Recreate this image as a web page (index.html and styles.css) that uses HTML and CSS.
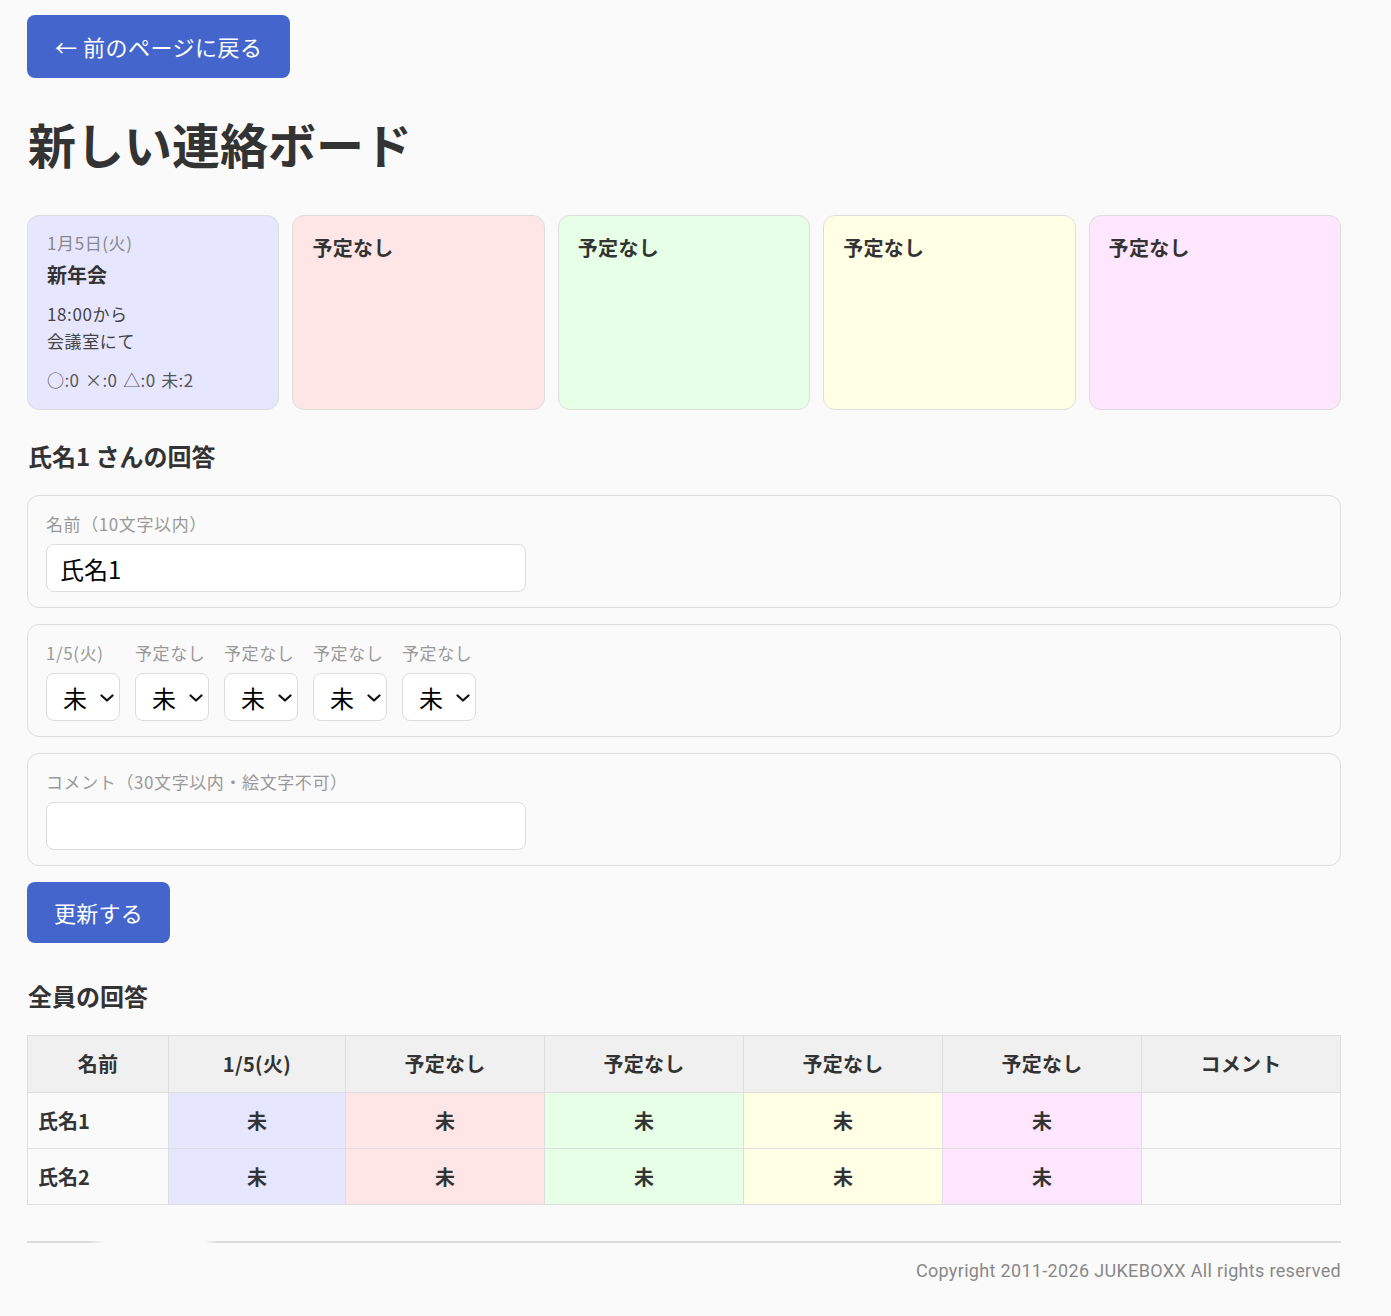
FILE: index.html
```html
<!DOCTYPE html>
<html lang="ja">
<head>
<meta charset="utf-8">
<title>新しい連絡ボード</title>
<link rel="stylesheet" href="styles.css">
</head>
<body>
<div class="page">
  <a class="btn back-btn" href="#">← 前のページに戻る</a>
  <h1 class="title">新しい連絡ボード</h1>

  <div class="cards">
    <div class="card c1">
      <div class="card-date">1月5日(火)</div>
      <div class="card-title">新年会</div>
      <div class="card-desc">18:00から<br>会議室にて</div>
      <div class="card-count">○:0 ×:0 △:0 未:2</div>
    </div>
    <div class="card c2"><div class="card-title empty">予定なし</div></div>
    <div class="card c3"><div class="card-title empty">予定なし</div></div>
    <div class="card c4"><div class="card-title empty">予定なし</div></div>
    <div class="card c5"><div class="card-title empty">予定なし</div></div>
  </div>

  <h2 class="section-title first">氏名1 さんの回答</h2>

  <div class="form-box">
    <div class="label">名前（10文字以内）</div>
    <input class="text-input" type="text" value="氏名1">
  </div>

  <div class="form-box">
    <div class="sel-row">
      <div class="sel-col">
        <div class="label">1/5(火)</div>
        <div class="sel-wrap"><select class="sel"><option>未</option></select><svg class="chev" viewBox="0 0 14 8" width="14" height="8"><path d="M1.5 1.5 L7 6.5 L12.5 1.5" fill="none" stroke="#111" stroke-width="2.2" stroke-linecap="round" stroke-linejoin="round"/></svg></div>
      </div>
      <div class="sel-col">
        <div class="label">予定なし</div>
        <div class="sel-wrap"><select class="sel"><option>未</option></select><svg class="chev" viewBox="0 0 14 8" width="14" height="8"><path d="M1.5 1.5 L7 6.5 L12.5 1.5" fill="none" stroke="#111" stroke-width="2.2" stroke-linecap="round" stroke-linejoin="round"/></svg></div>
      </div>
      <div class="sel-col">
        <div class="label">予定なし</div>
        <div class="sel-wrap"><select class="sel"><option>未</option></select><svg class="chev" viewBox="0 0 14 8" width="14" height="8"><path d="M1.5 1.5 L7 6.5 L12.5 1.5" fill="none" stroke="#111" stroke-width="2.2" stroke-linecap="round" stroke-linejoin="round"/></svg></div>
      </div>
      <div class="sel-col">
        <div class="label">予定なし</div>
        <div class="sel-wrap"><select class="sel"><option>未</option></select><svg class="chev" viewBox="0 0 14 8" width="14" height="8"><path d="M1.5 1.5 L7 6.5 L12.5 1.5" fill="none" stroke="#111" stroke-width="2.2" stroke-linecap="round" stroke-linejoin="round"/></svg></div>
      </div>
      <div class="sel-col">
        <div class="label">予定なし</div>
        <div class="sel-wrap"><select class="sel"><option>未</option></select><svg class="chev" viewBox="0 0 14 8" width="14" height="8"><path d="M1.5 1.5 L7 6.5 L12.5 1.5" fill="none" stroke="#111" stroke-width="2.2" stroke-linecap="round" stroke-linejoin="round"/></svg></div>
      </div>
    </div>
  </div>

  <div class="form-box">
    <div class="label">コメント（30文字以内・絵文字不可）</div>
    <input class="text-input" type="text" value="">
  </div>

  <button class="btn submit-btn" type="button">更新する</button>

  <h2 class="section-title second">全員の回答</h2>

  <table class="answers">
    <thead>
      <tr>
        <th class="w-name">名前</th>
        <th class="w-d1">1/5(火)</th>
        <th class="w-d">予定なし</th>
        <th class="w-d">予定なし</th>
        <th class="w-d">予定なし</th>
        <th class="w-d">予定なし</th>
        <th class="w-d">コメント</th>
      </tr>
    </thead>
    <tbody>
      <tr>
        <td class="name">氏名1</td>
        <td class="v c1">未</td>
        <td class="v c2">未</td>
        <td class="v c3">未</td>
        <td class="v c4">未</td>
        <td class="v c5">未</td>
        <td class="comment"></td>
      </tr>
      <tr>
        <td class="name">氏名2</td>
        <td class="v c1">未</td>
        <td class="v c2">未</td>
        <td class="v c3">未</td>
        <td class="v c4">未</td>
        <td class="v c5">未</td>
        <td class="comment"></td>
      </tr>
    </tbody>
  </table>

  <footer class="footer">
    <div class="footer-line"></div>
    <div class="copyright">Copyright 2011-2026 JUKEBOXX All rights reserved</div>
  </footer>
</div>
</body>
</html>
```

FILE: styles.css
```css
html, body {
  margin: 0;
  padding: 0;
  background: #fafafa;
}
body {
  font-family: "Noto Sans CJK JP", "Noto Sans", sans-serif;
  color: #333;
}
.page {
  width: 1314px;
  margin-left: 27px;
  padding-top: 15px;
  padding-bottom: 20px;
}
.btn {
  background: #4466cc;
  color: #fff;
  border: none;
  border-radius: 8px;
  font-family: "Noto Sans CJK JP", sans-serif;
  font-size: 22px;
  line-height: 31px;
  text-decoration: none;
  cursor: pointer;
  box-sizing: border-box;
  white-space: nowrap;
}
.back-btn {
  display: block;
  padding: 16px 0 16px 28px;
  width: 263px;
  height: 63px;
  letter-spacing: 0.5px;
}
.title {
  margin: 36px 0 0 1px;
  font-size: 48px;
  line-height: 58px;
  font-weight: 700;
  color: #333;
}
.cards {
  display: grid;
  grid-template-columns: repeat(5, 1fr);
  gap: 13px;
  margin-top: 43px;
}
.card {
  border: 1px solid #dedede;
  border-radius: 12px;
  padding: 15px 19px;
  min-height: 163px;
}
.c1 { background: #e6e6ff; }
.c2 { background: #ffe6e6; }
.c3 { background: #e6ffe6; }
.c4 { background: #ffffe6; }
.c5 { background: #ffe6ff; }
.card-date {
  font-size: 17px;
  line-height: 24px;
  color: #888;
  letter-spacing: 0.6px;
}
.card-title {
  font-size: 20px;
  line-height: 28px;
  font-weight: 700;
  margin-top: 6px;
  color: #333;
}
.card-title.empty {
  margin-top: 3px;
  letter-spacing: 0.3px;
}
.card-desc {
  font-size: 17px;
  line-height: 27px;
  margin-top: 11px;
  color: #444;
  letter-spacing: 0.6px;
}
.card-count {
  font-size: 17px;
  line-height: 27px;
  margin-top: 12px;
  color: #555;
  letter-spacing: 0.4px;
  word-spacing: 1.5px;
}
.section-title {
  font-size: 24px;
  line-height: 34px;
  font-weight: 700;
  margin: 0 0 0 1px;
  color: #333;
}
.section-title.first {
  margin-top: 29px;
  margin-bottom: 22px;
}
.section-title.second {
  margin-top: 36px;
  margin-bottom: 22px;
}
.form-box {
  border: 1px solid #dedede;
  border-radius: 12px;
  padding: 16px 18px 15px;
  margin-bottom: 16px;
}
.label {
  font-size: 17px;
  line-height: 24px;
  color: #999;
  margin-bottom: 8px;
  white-space: nowrap;
  letter-spacing: 0.6px;
}
.text-input {
  display: block;
  box-sizing: border-box;
  width: 480px;
  height: 48px;
  border: 1px solid #dcdcdc;
  border-radius: 8px;
  background: #fff;
  padding: 0 13px;
  font-family: "Noto Sans CJK JP", sans-serif;
  font-size: 24px;
  color: #000;
  outline: none;
}
.sel-row {
  display: flex;
  gap: 16px;
}
.sel-col {
  width: 73px;
}
.sel-wrap {
  position: relative;
  width: 74px;
  height: 48px;
}
.sel {
  appearance: none;
  -webkit-appearance: none;
  box-sizing: border-box;
  width: 74px;
  height: 48px;
  border: 1px solid #dcdcdc;
  border-radius: 8px;
  background: #fff;
  padding: 0 0 0 16px;
  font-family: "Noto Sans CJK JP", sans-serif;
  font-size: 24px;
  color: #000;
  outline: none;
}
.chev {
  position: absolute;
  right: 6px;
  top: 21px;
  pointer-events: none;
}
.submit-btn {
  display: block;
  padding: 15px 0;
  width: 143px;
  height: 61px;
  margin-top: 0;
  text-align: center;
  letter-spacing: 0.3px;
}
.answers {
  width: 1314px;
  border-collapse: collapse;
  table-layout: fixed;
}
.answers th,
.answers td {
  border: 1px solid #dedede;
  font-size: 20px;
  line-height: 28px;
  font-weight: 700;
  color: #333;
  height: 56px;
  padding: 0 10px;
  box-sizing: border-box;
}
.answers th {
  background: #f0f0f0;
  text-align: center;
  height: 57px;
  letter-spacing: 0.3px;
}
.w-name { width: 141px; }
.w-d1 { width: 177px; }
.w-d { width: 199px; }
.answers td.name {
  background: #fafafa;
  text-align: left;
}
.answers td.v {
  text-align: center;
}
.answers td.comment {
  background: #fafafa;
}
.footer {
  margin-top: 36px;
}
.footer-line {
  height: 2px;
  background: linear-gradient(to right, #dcdcdc 0, #dcdcdc 62px, rgba(220,220,220,0) 78px, rgba(220,220,220,0) 178px, #dcdcdc 190px, #dcdcdc 100%);
}
.copyright {
  margin-top: 15px;
  text-align: right;
  font-family: Roboto, "Liberation Sans", sans-serif;
  font-size: 18px;
  line-height: 26px;
  letter-spacing: 0.33px;
  color: #888;
}
```
